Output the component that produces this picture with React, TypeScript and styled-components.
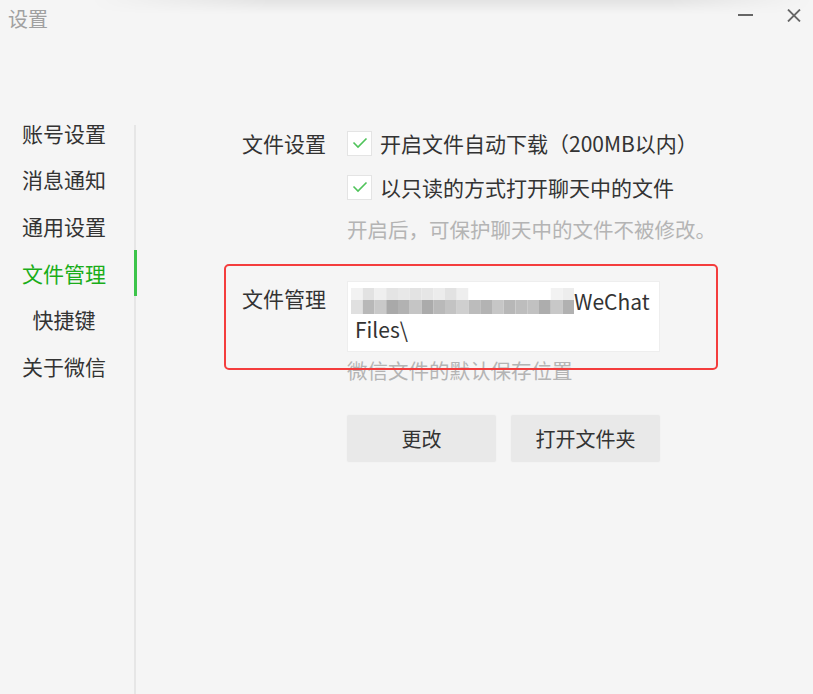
import React from 'react';
import styled, { createGlobalStyle } from 'styled-components';

const Global = createGlobalStyle`
  html, body { margin: 0; padding: 0; background: #f5f5f5; }
  body { font-family: "Noto Sans CJK SC", "Microsoft YaHei", "Noto Sans", sans-serif; color: #333; }
  * { box-sizing: border-box; }
`;

const Window = styled.div`
  width: 813px;
  height: 694px;
  background: #f5f5f5;
  display: flex;
  flex-direction: column;
  overflow: hidden;
  position: relative;
`;

const TitleBar = styled.div`
  height: 40px;
  display: flex;
  align-items: center;
  justify-content: space-between;
  padding: 0 12px 0 8px;
  position: relative;
  &::before {
    content: '';
    position: absolute;
    left: 90px;
    right: 0;
    top: 0;
    height: 14px;
    background: linear-gradient(to bottom, rgba(0, 0, 0, 0.07), rgba(0, 0, 0, 0));
    -webkit-mask-image: linear-gradient(to right, transparent, #000 25%, #000 80%, transparent);
    mask-image: linear-gradient(to right, transparent, #000 25%, #000 80%, transparent);
  }
`;

const Title = styled.div`
  font-size: 20px;
  line-height: 24px;
  color: #a0a0a0;
  margin-top: -2px;
`;

const WinButtons = styled.div`
  display: flex;
  align-items: center;
  gap: 34px;
  margin-top: -10px;
`;

const WinIcon = styled.svg`
  display: block;
`;

const Body = styled.div`
  flex: 1;
  display: flex;
  margin-top: 70px;
`;

const Sidebar = styled.nav`
  width: 134px;
  display: flex;
  flex-direction: column;
`;

const NavItem = styled.div<{ $active?: boolean }>`
  height: 46.6px;
  display: flex;
  align-items: center;
  justify-content: center;
  padding-right: 6px;
  padding-bottom: 1px;
  font-size: 21px;
  color: ${(p) => (p.$active ? '#1aad19' : '#333')};
  position: relative;
  &::after {
    content: '';
    display: ${(p) => (p.$active ? 'block' : 'none')};
    position: absolute;
    right: -3px;
    top: 0;
    width: 3px;
    height: 100%;
    background: #3cc44a;
  }
`;

const Divider = styled.div`
  width: 2px;
  margin-top: 15px;
  background: #e6e6e6;
`;

const Content = styled.div`
  flex: 1;
  padding: 20px 0 0 106px;
  display: flex;
  flex-direction: column;
`;

const Section = styled.div`
  display: grid;
  grid-template-columns: 105px 1fr;
  position: relative;
`;

const Label = styled.div<{ $top?: number }>`
  font-size: 21px;
  line-height: 26px;
  color: #333;
  padding-top: ${(p) => p.$top ?? 0}px;
`;

const Options = styled.div`
  display: flex;
  flex-direction: column;
`;

const Option = styled.label`
  display: flex;
  align-items: center;
  gap: 8px;
  height: 26px;
  font-size: 21px;
  color: #333;
  margin-bottom: 18px;
`;

const Box = styled.span`
  width: 25px;
  height: 25px;
  background: #fff;
  border: 1px solid #e4e4e4;
  display: flex;
  align-items: center;
  justify-content: center;
  flex-shrink: 0;
`;

const Hint = styled.div<{ $mt?: number }>`
  font-size: 20.5px;
  line-height: 26px;
  color: #b4b4b4;
  margin-top: ${(p) => p.$mt ?? 0}px;
`;

const PathBox = styled.div`
  width: 313px;
  height: 71px;
  background: #fff;
  border: 1px solid #eeeeee;
  padding: 3px 7px 0 3px;
  font-size: 21px;
  color: #333;
  display: flex;
  flex-direction: column;
`;

const PathLine = styled.div`
  display: flex;
  align-items: flex-end;
  height: 30px;
  line-height: 28px;
`;

const PathLine2 = styled.div`
  line-height: 28px;
  padding-left: 4px;
`;

const Annotation = styled.div`
  position: absolute;
  left: -18px;
  top: -17px;
  width: 494px;
  height: 106px;
  border: 2.5px solid #f43d3d;
  border-radius: 5px;
  pointer-events: none;
`;

const Buttons = styled.div`
  display: flex;
  gap: 15px;
  margin-top: 32px;
  margin-left: 105px;
`;

const Button = styled.button`
  width: 149px;
  height: 47px;
  border: none;
  border-radius: 2px;
  background: #e9e9e9;
  font-family: inherit;
  font-size: 20px;
  color: #333;
  box-shadow: 0 0 2px rgba(0, 0, 0, 0.04);
`;

const FileSection = styled(Section)`
  margin-top: 39px;
`;

const Check = () => (
  <svg width="16" height="12" viewBox="0 0 16 12">
    <polyline points="1.5,5.5 6,10 14.5,1.5" fill="none" stroke="#4fc35a" strokeWidth="1.6" />
  </svg>
);

const topRow = [
  '#f2f2f2', '#e2e2e2', '#efefef', '#e4e4e4', '#e8e8e8', '#e3e3e3', '#e6e6e6', '#ececec', '#e2e2e2', '#eeeeee',
  '#ffffff', '#ffffff', '#ffffff', '#ffffff', '#ffffff', '#ffffff', '#ffffff', '#f2f2f2', '#ededed',
];
const bottomRow = [
  '#e0e0e0', '#b8b8b8', '#c9c9c9', '#a9a9a9', '#b2b2b2', '#c5c5c5', '#ababab', '#b9b9b9', '#c3c3c3', '#cfcfcf',
  '#bcbcbc', '#b3b3b3', '#c6c6c6', '#b7b7b7', '#bdbdbd', '#c1c1c1', '#adadad', '#c8c8c8', '#b1b1b1',
];

const Mosaic = () => (
  <svg width="223" height="27" viewBox="0 0 223 27" style={{ display: 'block', flexShrink: 0 }}>
    {topRow.map((c, i) => (
      <rect key={'t' + i} x={i * 11.75} y={0} width={11.75} height={12} fill={c} />
    ))}
    {bottomRow.map((c, i) => (
      <rect key={'b' + i} x={i * 11.75} y={12} width={11.75} height={14} fill={c} />
    ))}
  </svg>
);

const navItems = ['账号设置', '消息通知', '通用设置', '文件管理', '快捷键', '关于微信'];

export default function App() {
  return (
    <>
      <Global />
      <Window>
        <TitleBar>
          <Title>设置</Title>
          <WinButtons>
            <WinIcon width="15" height="4" viewBox="0 0 15 4">
              <line x1="0" y1="2" x2="15" y2="2" stroke="#666" strokeWidth="2" />
            </WinIcon>
            <WinIcon width="14" height="13" viewBox="0 0 14 13">
              <path d="M1 0.5 L13 12.5 M13 0.5 L1 12.5" stroke="#666" strokeWidth="1.8" fill="none" />
            </WinIcon>
          </WinButtons>
        </TitleBar>
        <Body>
          <Sidebar>
            {navItems.map((t) => (
              <NavItem key={t} $active={t === '文件管理'}>
                {t}
              </NavItem>
            ))}
          </Sidebar>
          <Divider />
          <Content>
            <Section>
              <Label>文件设置</Label>
              <Options>
                <Option>
                  <Box>
                    <Check />
                  </Box>
                  开启文件自动下载（200MB以内）
                </Option>
                <Option>
                  <Box>
                    <Check />
                  </Box>
                  以只读的方式打开聊天中的文件
                </Option>
                <Hint $mt={-2}>开启后，可保护聊天中的文件不被修改。</Hint>
              </Options>
            </Section>
            <FileSection>
              <Label $top={4}>文件管理</Label>
              <Options>
                <PathBox>
                  <PathLine>
                    <Mosaic />
                    <span>WeChat</span>
                  </PathLine>
                  <PathLine2>Files\</PathLine2>
                </PathBox>
                <Hint $mt={5}>微信文件的默认保存位置</Hint>
              </Options>
              <Annotation />
            </FileSection>
            <Buttons>
              <Button>更改</Button>
              <Button>打开文件夹</Button>
            </Buttons>
          </Content>
        </Body>
      </Window>
    </>
  );
}
